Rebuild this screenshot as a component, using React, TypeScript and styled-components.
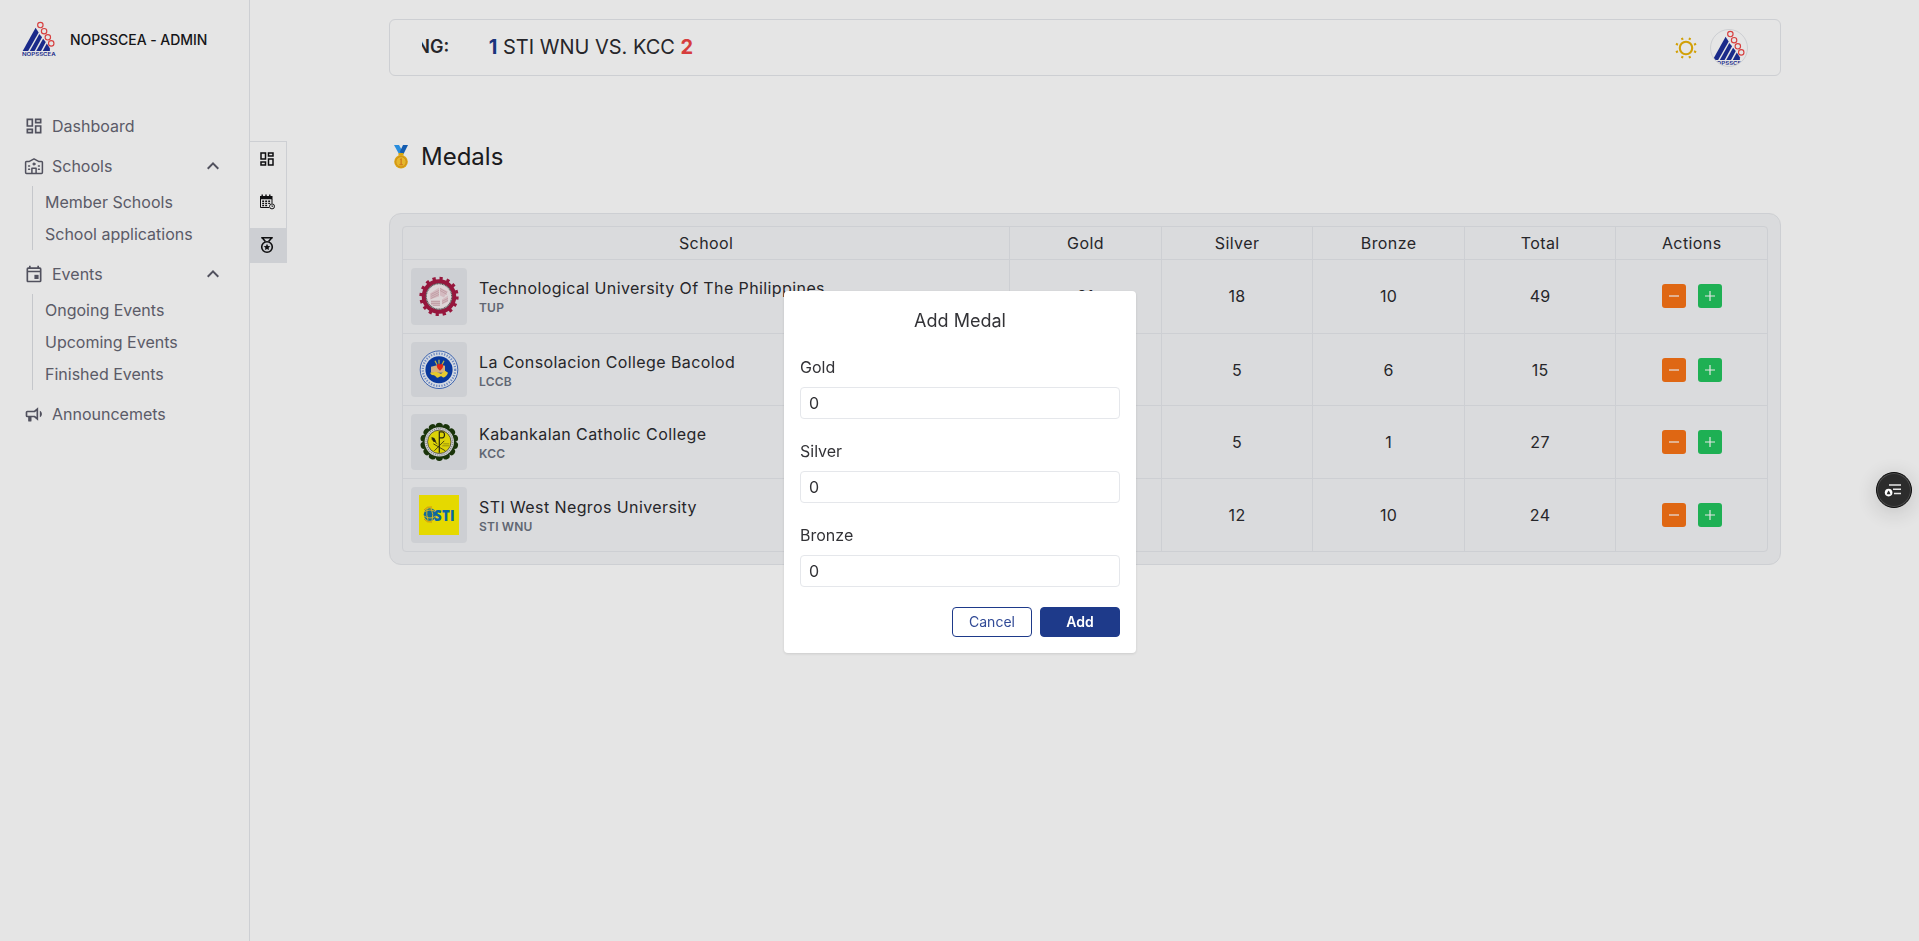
import React from "react";
import styled, { createGlobalStyle } from "styled-components";
import { MdOutlineDashboard, MdKeyboardArrowUp } from "react-icons/md";

const GlobalStyle = createGlobalStyle`
  *, *::before, *::after { box-sizing: border-box; }
  body {
    margin: 0;
    background: #fff;
    color: #2b2b2f;
    font-family: Inter, "Liberation Sans", sans-serif;
    font-size: 16px;
    line-height: 24px;
    overflow: hidden;
  }
  button, input { font: inherit; }
  svg { display: block; flex: none; }
`;

const line = "#e5e7eb";

/* ---------- layout ---------- */

const Page = styled.div`
  display: flex;
  height: 100vh;
`;

const Sidebar = styled.aside`
  width: 250px;
  flex: none;
  border-right: 1px solid ${line};
`;

const Brand = styled.div`
  display: flex;
  align-items: center;
  gap: 14px;
  height: 79px;
  padding-left: 22px;
  font-size: 14px;
  font-weight: 500;
  letter-spacing: -0.06px;
  color: #18181b;

  svg { margin-bottom: 2px; }
`;

const Nav = styled.nav`
  padding: 27px 24px 0;
  color: #666673;
`;

const NavItem = styled.div`
  display: flex;
  align-items: center;
  gap: 8px;
  height: 40px;

  svg { color: #5b5b69; }
`;

const NavLabel = styled.span`
  flex: 1;
`;

const SubList = styled.ul`
  list-style: none;
  margin: 0 0 4px 8px;
  padding: 0 0 0 12px;
  border-left: 1px solid #dcdee3;
`;

const SubItem = styled.li`
  height: 32px;
  line-height: 32px;
`;

const Rail = styled.div`
  display: flex;
  flex-direction: column;
  gap: 8px;
  flex: none;
  width: 37px;
  height: 122px;
  margin-top: 141px;
  border-top: 1px solid ${line};
  border-right: 1px solid ${line};
  color: #111113;
`;

const RailItem = styled.div<{ $active?: boolean }>`
  display: flex;
  align-items: center;
  justify-content: center;
  height: 35px;
  margin-right: -1px;
  padding: 0 3px 1px 0;
  background: ${(p) => (p.$active ? line : "transparent")};
`;

const Main = styled.main`
  flex: 1;
  padding: 19px 138px 0 102px;
`;

const TopBar = styled.header`
  display: flex;
  align-items: center;
  height: 57px;
  padding: 0 32px;
  border: 1px solid ${line};
  border-radius: 6px;
`;

const Ticker = styled.div`
  flex: 1;
  display: flex;
  align-items: center;
  overflow: hidden;
  white-space: nowrap;
  padding-bottom: 1px;
  font-size: 20px;
  line-height: 28px;
`;

const TickerLabel = styled.span`
  margin-left: -65.5px;
  margin-right: 39.5px;
  font-size: 18px;
  font-weight: 600;
`;

const Score = styled.b<{ $color: string }>`
  color: ${(p) => p.$color};
  font-weight: 700;
`;

const Avatar = styled.div`
  display: flex;
  align-items: center;
  justify-content: center;
  width: 38px;
  height: 38px;
  margin-left: 12px;
  border: 1px solid ${line};
  border-radius: 50%;
  overflow: hidden;
`;

const Heading = styled.h1`
  display: flex;
  align-items: center;
  gap: 11px;
  margin: 65px 0 0 3px;
  height: 32px;
  font-size: 24px;
  font-weight: 400;
  color: #202023;
`;

/* ---------- table ---------- */

const Card = styled.section`
  margin-top: 40px;
  padding: 12px;
  border: 1px solid ${line};
  border-radius: 12px;
  background: #f3f4f6;
`;

const Table = styled.div`
  border: 1px solid ${line};
  border-radius: 4px;
  letter-spacing: 0.4px;
`;

const Row = styled.div`
  display: grid;
  grid-template-columns: 4fr repeat(5, 1fr);
  & + & { border-top: 1px solid ${line}; }
`;

const Cell = styled.div<{ $head?: boolean }>`
  display: flex;
  align-items: center;
  justify-content: center;
  gap: 12px;
  min-width: 0;
  height: ${(p) => (p.$head ? "32px" : "auto")};
  & + & { border-left: 1px solid ${line}; }
`;

const SchoolCell = styled.div`
  display: flex;
  align-items: center;
  gap: 12px;
  padding: 8px;
  min-width: 0;
  & + ${Cell} { border-left: 1px solid ${line}; }
`;

const LogoBox = styled.div`
  padding: 8px;
  border-radius: 4px;
  background: ${line};
`;

const SchoolName = styled.div`
  line-height: 24px;
  white-space: nowrap;
`;

const SchoolCode = styled.div`
  font-size: 12px;
  line-height: 16px;
  font-weight: 600;
  letter-spacing: 0.2px;
  color: #6b7280;
`;

const ActionButton = styled.button<{ $bg: string }>`
  display: flex;
  align-items: center;
  justify-content: center;
  width: 24px;
  height: 24px;
  padding: 0;
  border: 0;
  border-radius: 3px;
  color: #fff;
  background: ${(p) => p.$bg};
`;

/* ---------- dialog ---------- */

const Overlay = styled.div`
  position: fixed;
  inset: 0;
  display: flex;
  align-items: center;
  justify-content: center;
  padding: 3px 0 0 1px;
  background: rgba(0, 0, 0, 0.1);
`;

const Dialog = styled.div`
  width: 352px;
  height: 362px;
  padding: 16px;
  border-radius: 4px;
  background: #fff;
  color: #333337;
  box-shadow: 0 1px 3px rgba(0, 0, 0, 0.12);
`;

const DialogTitle = styled.h2`
  margin: 0 0 20px;
  font-size: 18px;
  line-height: 28px;
  font-weight: 400;
  text-align: center;
`;

const Field = styled.label`
  display: block;
  height: 84px;
`;

const FieldLabel = styled.span`
  display: block;
  height: 32px;
`;

const Input = styled.input`
  display: block;
  width: 100%;
  height: 32px;
  padding: 0 8px;
  border: 1px solid ${line};
  border-radius: 4px;
  color: inherit;
  background: #fff;
  outline: none;
`;

const DialogActions = styled.div`
  display: flex;
  justify-content: flex-end;
  gap: 8px;
`;

const DialogButton = styled.button<{ $primary?: boolean }>`
  width: 80px;
  height: 30px;
  padding: 0;
  border: 1px solid #1e3a8a;
  border-radius: 4px;
  font-size: 14px;
  line-height: 20px;
  font-weight: ${(p) => (p.$primary ? 600 : 400)};
  color: ${(p) => (p.$primary ? "#fff" : "#314a96")};
  background: ${(p) => (p.$primary ? "#1e3a8a" : "#fff")};
`;

const FloatingButton = styled.div`
  position: fixed;
  right: 7px;
  top: 472px;
  width: 36px;
  height: 36px;
  border: 1px solid #0c0c0c;
  border-radius: 50%;
  background: #2c2c2c;
  box-shadow: inset 0 0 0 1px #4c4c4c, 0 4px 24px rgba(0, 0, 0, 0.18);
`;

/* ---------- drawings ---------- */

const BrandLogo = () => (
  <svg width="34" height="36" viewBox="0 0 100 106">
    <g fill="#1d2f9a">
      <path d="M2 88 40 20 49 34 18 88Z" />
      <path d="M23 88 51 38 59 48 37 88Z" />
      <path d="M42 88 62 52 70 62 56 88Z" />
      <path d="M61 88 73 66 82 80 82 88Z" />
    </g>
    <g fill="#fff" stroke="#f04848" strokeWidth="3.4">
      <circle cx="54" cy="12" r="8" />
      <circle cx="65" cy="30" r="8" />
      <circle cx="76" cy="48" r="8" />
      <circle cx="86" cy="66" r="8" />
    </g>
    <text x="0" y="104" fontSize="15.5" fontWeight="600" fill="#1d2f9a" textLength="99" lengthAdjust="spacingAndGlyphs">
      NOPSSCEA
    </text>
  </svg>
);

const SchoolIcon = () => (
  <svg width="20" height="20" viewBox="0 0 20 20" fill="none" stroke="currentColor" strokeWidth="1.5" strokeLinejoin="round" strokeLinecap="round">
    <path d="M5.4 5.4 10 2.9l4.6 2.5h2.9a.9.9 0 0 1 .9.9v10.2a.9.9 0 0 1-.9.9h-15a.9.9 0 0 1-.9-.9V6.3a.9.9 0 0 1 .9-.9Z" />
    <path d="M7.9 17.2v-5h4.2v5" />
    <circle cx="10" cy="8" r="1.1" fill="currentColor" strokeWidth="1" />
    <path d="M4.6 10h1M4.6 13.2h1M14.4 10h1M14.4 13.2h1" strokeWidth="1.4" />
  </svg>
);

const EventIcon = () => (
  <svg width="20" height="20" viewBox="0 0 24 24" fill="currentColor">
    <path d="M19 4h-1V2h-2v2H8V2H6v2H5a2 2 0 0 0-2 2v14c0 1.1.9 2 2 2h14a2 2 0 0 0 2-2V6a2 2 0 0 0-2-2zm0 16H5V10h14v10zm0-12H5V6h14v2z" />
    <path d="M12.5 13h5v5h-5z" />
  </svg>
);

const BullhornIcon = () => (
  <svg width="20" height="20" viewBox="0 0 24 24" fill="currentColor">
    <path d="M12 8H4a2 2 0 0 0-2 2v4a2 2 0 0 0 2 2h1v4a1 1 0 0 0 1 1h2a1 1 0 0 0 1-1v-4h3l5 4V4l-5 4m3 7.6L13 14H4v-4h9l2-1.6v7.2m6.5-3.6c0 1.71-.96 3.26-2.5 4V8c1.53.75 2.5 2.3 2.5 4Z" />
  </svg>
);

const CalendarClockIcon = () => (
  <svg width="16" height="16" viewBox="0 0 16 16" fill="currentColor">
    <path d="M1 2h1.5V.6h1.4V2h2.4V.6h1.4V2h2.4V.6h1.4V2H13.5v3.2H1Z" />
    <path d="M1 5h1v8h8v1H2a1 1 0 0 1-1-1ZM12.5 5h1v4.5h-1Z" />
    <path d="M3.2 6.4h1.9v1.5H3.2zM6.2 6.4h1.9v1.5H6.2zM9.2 6.4h1.9v1.5H9.2zM3.2 8.7h1.9v1.5H3.2zM6.2 8.7h1.9v1.5H6.2zM9.2 8.7h1.9v1.2H9.2zM3.2 11h1.9v1.3H3.2zM6.2 11h1.9v1.3H6.2z" />
    <circle cx="13" cy="12.4" r="2.5" fill="#fff" stroke="currentColor" />
    <path d="M12.7 10.9h.7v1.5h.9v.6h-1.6z" />
  </svg>
);

const MedalIcon = () => (
  <svg width="16" height="18" viewBox="0 0 16 18" fill="none" stroke="currentColor" strokeWidth="1.6">
    <path d="M2.2 1.8h11.6M3.2 1.8l3.2 3.7M12.8 1.8l-3.2 3.7" />
    <circle cx="8" cy="11" r="5.3" />
    <path d="m8 7.8 1 2.1 2.3.3-1.7 1.6.4 2.3-2-1.1-2 1.1.4-2.3-1.7-1.6 2.3-.3Z" fill="currentColor" stroke="none" />
  </svg>
);

const SunIcon = () => (
  <svg width="24" height="24" viewBox="-12 -12 24 24" fill="none" stroke="#eab308" strokeWidth="2.1">
    <circle r="6.2" />
    {[22.5, 67.5, 112.5, 157.5, 202.5, 247.5, 292.5, 337.5].map((a) => (
      <path key={a} d="M0 -8.7V-10.9" transform={`rotate(${a})`} />
    ))}
  </svg>
);

const GoldMedal = () => (
  <svg width="18" height="24" viewBox="0 0 18 24">
    <path d="M2 0h5l4 7-2 3-2-1Z" fill="#2e9df7" />
    <path d="M11 0h5l-4.5 9H9L8 6.5Z" fill="#1767c5" />
    <path d="M6.5 8h5v2.5h-5z" fill="#f2b90d" />
    <circle cx="9" cy="16.8" r="6.8" fill="#f5b912" />
    <circle cx="9" cy="16.8" r="5.2" fill="#ffcc32" stroke="#e2961c" strokeWidth="0.9" />
    <path d="M7.6 14.5 9 13.3h.8v6H11v1H7.3v-1h1.2v-4.6Z" fill="#e8871e" />
  </svg>
);

const TupLogo = () => (
  <svg width="40" height="40.9" viewBox="0 0 40 41">
    <g transform="translate(20 20.5)" fill="none">
      <circle r="15.2" stroke="#a81a44" strokeWidth="4.2" />
      <circle r="18" stroke="#a81a44" strokeWidth="3.4" strokeDasharray="3.2 3.869" />
      <circle r="12.8" fill="#f7eef0" stroke="#666" strokeWidth="1.3" strokeDasharray="1.2 .5" />
      <path d="M-9-3 0-9v9l-9 3ZM1-9l8 4-4 6-4-2ZM-8 4h9v5h-9ZM3 3l6-4v6l-6 3Z" fill="#ecd0d6" />
      <path d="M-8-2l8-4M-8 0l8-4M-8 2l8-4M1-8l7 4M1-6l7 4M-8 5h9M-8 7h9M-6 9h7M3 5l6-3M3 7l6-3" stroke="#c99aa5" strokeWidth=".6" />
    </g>
  </svg>
);

const LccbLogo = () => (
  <svg width="40" height="39.5" viewBox="0 0 40 39">
    <g transform="translate(20 19.5)" fill="none">
      <circle r="18.8" fill="#eef3fb" stroke="#1c50b8" strokeWidth=".8" />
      <circle r="16.2" stroke="#7d9bd8" strokeWidth="2.2" strokeDasharray="1.3 1.4" />
      <circle r="13.6" fill="#0b3fae" />
      <path d="M-8-3 0-5l6 1v7h-14Z" fill="#efc48b" />
      <path d="M-9 3c2 4 4 1 6 4s4-2 6 0 5-1 6-4l-3-2-4 3-5-2Z" fill="#ffe034" />
      <path d="M-4-9l2 4M0-10v4M5-9l-2 4" stroke="#d6cf45" strokeWidth="1.2" />
      <path d="M1 1c-4-3-4-7-1-7l1 1 1-1c3 0 3 4-1 7Z" fill="#f62d1c" />
    </g>
  </svg>
);

const KccLogo = () => (
  <svg width="40" height="39.7" viewBox="0 0 40 40">
    <g transform="translate(20.3 20)" fill="none">
      <circle r="16" fill="#1d3a0c" />
      {[...Array(14)].map((_, i) => (
        <circle key={i} r="3.7" cy="-15.6" fill="#1d3a0c" transform={`rotate(${(i * 360) / 14})`} />
      ))}
      <circle r="14.8" fill="#e8e9ec" />
      <circle r="13.4" stroke="#999" strokeWidth="1.3" strokeDasharray="1.1 1.1" />
      <circle r="11.8" fill="#f5ea0a" stroke="#333" strokeWidth=".7" />
      <path d="M0 11V-10h3c3 0 3 6 0 6H0" stroke="#2b2a12" strokeWidth="1.2" />
      <path d="M-5 9 5-1M-6 2l12 7M-8-3l6 5" stroke="#2b2a12" strokeWidth=".8" />
      <path d="M-8-5l3 1 2 4-3 0Z" fill="#2b2a12" />
      <path d="M3 4h7M4 2h6" stroke="#9a9210" strokeWidth=".8" />
    </g>
  </svg>
);

const StiLogo = () => (
  <svg width="40" height="40" viewBox="0 0 40 40">
    <path fill="#fff200" d="M0 0h40v40H0z" />
    <circle cx="11" cy="19.5" r="6.3" fill="#1576a8" />
    <path d="M5 17q6-4 12 0M5 21q6 4 12 0M8 14q-1 6 1 11M12 13q3 6 1 13" fill="none" stroke="#e8c92a" strokeWidth="1" />
    <path d="M5 15q3-4 8-3M5 24q3 4 8 3" fill="none" stroke="#e79b1e" strokeWidth="1" />
    <text x="15" y="26" fontSize="15.5" fontWeight="800" fontFamily="Open Sans, sans-serif" fill="#0b74b5" textLength="21" lengthAdjust="spacingAndGlyphs">
      STI
    </text>
  </svg>
);

const PanelIcon = () => (
  <svg width="34" height="34" viewBox="0 0 34 34" fill="none">
    <path d="M12 12h12M16 16.3h8M17 20.5h7" stroke="#e6e6e6" strokeWidth="1.6" />
    <circle cx="11.6" cy="19.6" r="4.7" fill="#2c2c2c" />
    <circle cx="11.6" cy="19.6" r="3.8" fill="#fff" />
    <path d="m11.6 17.4 1 1.5.9 2.3H9.7l.9-2.3Z" fill="#2c2c2c" />
  </svg>
);

const SignIcon = ({ plus }: { plus?: boolean }) => (
  <svg width="12" height="12" viewBox="0 0 12 12" stroke="currentColor" strokeWidth="1.2">
    <path d={plus ? "M1 6h10M6 1v10" : "M1 6h10"} />
  </svg>
);

/* ---------- data ---------- */

const schools = [
  { name: "Technological University Of The Philippines", code: "TUP", logo: <TupLogo />, medals: [21, 18, 10, 49] },
  { name: "La Consolacion College Bacolod", code: "LCCB", logo: <LccbLogo />, medals: [4, 5, 6, 15] },
  { name: "Kabankalan Catholic College", code: "KCC", logo: <KccLogo />, medals: [21, 5, 1, 27] },
  { name: "STI West Negros University", code: "STI WNU", logo: <StiLogo />, medals: [2, 12, 10, 24] },
];

const columns = ["School", "Gold", "Silver", "Bronze", "Total", "Actions"];

const navigation = [
  { label: "Dashboard", icon: <MdOutlineDashboard size={20} />, children: [] },
  { label: "Schools", icon: <SchoolIcon />, children: ["Member Schools", "School applications"] },
  { label: "Events", icon: <EventIcon />, children: ["Ongoing Events", "Upcoming Events", "Finished Events"] },
  { label: "Announcemets", icon: <BullhornIcon />, children: [] },
];

export default function App() {
  return (
    <>
      <GlobalStyle />
      <Page>
        <Sidebar>
          <Brand>
            <BrandLogo />
            NOPSSCEA - ADMIN
          </Brand>
          <Nav>
            {navigation.map((item) => (
              <React.Fragment key={item.label}>
                <NavItem>
                  {item.icon}
                  <NavLabel>{item.label}</NavLabel>
                  {item.children.length > 0 && <MdKeyboardArrowUp size={24} />}
                </NavItem>
                {item.children.length > 0 && (
                  <SubList>
                    {item.children.map((child) => (
                      <SubItem key={child}>{child}</SubItem>
                    ))}
                  </SubList>
                )}
              </React.Fragment>
            ))}
          </Nav>
        </Sidebar>
        <Rail>
          <RailItem><MdOutlineDashboard size={18} /></RailItem>
          <RailItem><CalendarClockIcon /></RailItem>
          <RailItem $active><MedalIcon /></RailItem>
        </Rail>
        <Main>
          <TopBar>
            <Ticker>
              <TickerLabel>ONGOING:</TickerLabel>
              <span>
                <Score $color="#1e3a8a">1</Score> STI WNU VS. KCC <Score $color="#ef4444">2</Score>
              </span>
            </Ticker>
            <SunIcon />
            <Avatar><BrandLogo /></Avatar>
          </TopBar>
          <Heading>
            <GoldMedal />
            Medals
          </Heading>
          <Card>
            <Table>
              <Row>
                {columns.map((c) => (
                  <Cell key={c} $head>{c}</Cell>
                ))}
              </Row>
              {schools.map((s) => (
                <Row key={s.code}>
                  <SchoolCell>
                    <LogoBox>{s.logo}</LogoBox>
                    <div>
                      <SchoolName>{s.name}</SchoolName>
                      <SchoolCode>{s.code}</SchoolCode>
                    </div>
                  </SchoolCell>
                  {s.medals.map((m, i) => (
                    <Cell key={i}>{m}</Cell>
                  ))}
                  <Cell>
                    <ActionButton $bg="#f97316"><SignIcon /></ActionButton>
                    <ActionButton $bg="#22c55e"><SignIcon plus /></ActionButton>
                  </Cell>
                </Row>
              ))}
            </Table>
          </Card>
        </Main>
      </Page>
      <Overlay>
        <Dialog>
          <DialogTitle>Add Medal</DialogTitle>
          {["Gold", "Silver", "Bronze"].map((f) => (
            <Field key={f}>
              <FieldLabel>{f}</FieldLabel>
              <Input defaultValue="0" />
            </Field>
          ))}
          <DialogActions>
            <DialogButton>Cancel</DialogButton>
            <DialogButton $primary>Add</DialogButton>
          </DialogActions>
        </Dialog>
      </Overlay>
      <FloatingButton><PanelIcon /></FloatingButton>
    </>
  );
}
